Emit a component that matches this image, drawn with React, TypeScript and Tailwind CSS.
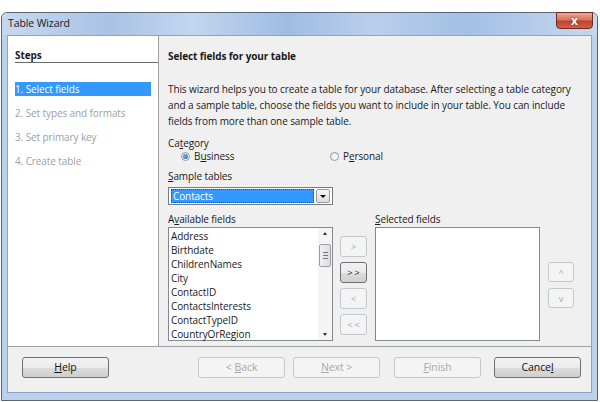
import React from "react";

const fields = [
  "Address",
  "Birthdate",
  "ChildrenNames",
  "City",
  "ContactID",
  "ContactsInterests",
  "ContactTypeID",
  "CountryOrRegion",
];

function SmallBtn({ label, enabled, className = "" }: { label: string; enabled?: boolean; className?: string }) {
  return (
    <div
      className={`flex items-center justify-center rounded-[3px] border text-[9px] leading-none ${
        enabled
          ? "border-[#707070] bg-[linear-gradient(#f2f2f2_0%,#ebebeb_50%,#dddddd_51%,#cfcfcf_100%)] text-[#222]"
          : "border-[#c4c8cb] bg-[#f4f4f4] text-[#a8a8a8]"
      } ${className}`}
    >
      {label}
    </div>
  );
}

function FootBtn({ children, enabled, className = "" }: { children: React.ReactNode; enabled?: boolean; className?: string }) {
  return (
    <div
      className={`flex h-[21px] w-[87px] items-center justify-center rounded-[3px] border text-[10.5px] ${
        enabled
          ? "border-[#707070] bg-[linear-gradient(#f2f2f2_0%,#ebebeb_50%,#dddddd_51%,#cfcfcf_100%)] text-[#111]"
          : "border-[#c4c8cb] bg-[#f4f4f4] text-[#a8a8a8]"
      } ${className}`}
    >
      {children}
    </div>
  );
}

function Radio({ checked }: { checked?: boolean }) {
  return (
    <span className="flex h-[9px] w-[9px] items-center justify-center rounded-full border border-[#8a9aab] bg-[linear-gradient(135deg,#e4e8ec,#ffffff)]">
      {checked && <span className="h-[5px] w-[5px] rounded-full bg-[radial-gradient(circle_at_40%_40%,#6fb0e0,#1f5f96)]" />}
    </span>
  );
}

export default function App() {
  return (
    <div className="h-[402px] w-[600px] overflow-hidden bg-white font-['Open_Sans',sans-serif] text-[10px] tracking-[-0.1px] text-black">
      <div className="ml-[1px] mt-[12px] flex h-[389px] w-[597px] flex-col rounded-t-[6px] border border-[#56687c] bg-[#bcd2ec]">
        {/* title bar */}
        <div className="relative flex h-[22px] shrink-0 items-center rounded-t-[5px] bg-[linear-gradient(90deg,#c6d8ee_0%,#aac3e5_18%,#c2d6ee_32%,#a0bce2_48%,#b9cfeb_62%,#a5c0e5_78%,#c4d8ef_100%)] pl-[6px]">
          <span className="text-[10.5px] text-[#1a1a1a]">Table Wizard</span>
          <div className="absolute right-[4px] top-[-1px] flex h-[17px] w-[37px] items-center justify-center rounded-b-[4px] border border-[#6e2a22] bg-[linear-gradient(#e9a999_0%,#d8735f_45%,#c2412a_55%,#d0614a_100%)]">
            <span className="text-[12px] font-bold leading-none text-white [text-shadow:0_0_2px_#5a1a10]">x</span>
          </div>
        </div>
        {/* client area */}
        <div className="mx-[5px] flex h-[358px] flex-col border border-[#8ea4c0] bg-[#f0f0f0]">
          <div className="flex h-[311px] border-b border-[#a0a0a0]">
            {/* steps */}
            <div className="w-[151px] shrink-0 border-r border-[#a0a0a0] bg-white pl-[7px] pr-[7px] pt-[13px]">
              <div className="mr-[-7px] h-[14px] border-b border-[#6a6a6a] font-bold leading-[12px] text-[#1a1a1a]">
                Steps
              </div>
              <div className="mt-[19px] flex flex-col gap-[10px]">
                <div className="h-[14px] bg-[#3399ff] leading-[14px] text-white">1. Select fields</div>
                <div className="h-[14px] leading-[14px] text-[#a0a0a0]">2. Set types and formats</div>
                <div className="h-[14px] leading-[14px] text-[#a0a0a0]">3. Set primary key</div>
                <div className="h-[14px] leading-[14px] text-[#a0a0a0]">4. Create table</div>
              </div>
            </div>
            {/* main */}
            <div className="flex-1 pl-[9px] pt-[13px] text-[#1a1a1a]">
              <div className="h-[14px] font-bold leading-[14px]">Select fields for your table</div>
              <p className="mt-[18px] w-[412px] leading-[16px]">
                This wizard helps you to create a table for your database. After selecting a table category and a
                sample table, choose the fields you want to include in your table. You can include fields from more
                than one sample table.
              </p>
              <div className="mt-[8px] h-[13px] leading-[13px]">
                Ca<span className="underline">t</span>egory
              </div>
              <div className="flex h-[13px] items-center leading-[13px]">
                <div className="ml-[13px] flex w-[149px] items-center gap-[4px]">
                  <Radio checked />
                  <span>
                    B<span className="underline">u</span>siness
                  </span>
                </div>
                <div className="flex items-center gap-[4px]">
                  <Radio />
                  <span>
                    P<span className="underline">e</span>rsonal
                  </span>
                </div>
              </div>
              <div className="mt-[6px] h-[14px] leading-[14px]">
                <span className="underline">S</span>ample tables
              </div>
              <div className="mt-[4px] flex h-[18px] w-[165px] items-center gap-[2px] border border-[#7a7a7a] bg-white px-[2px]">
                <div className="flex h-[14px] flex-1 items-center border border-dotted border-[#1a4f8a] bg-[#3399ff] pl-[1px] text-white">
                  Contacts
                </div>
                <div className="flex h-[14px] w-[14px] items-center justify-center rounded-[2px] border border-[#9a9a9a] bg-[linear-gradient(#f7f7f7,#dcdcdc)]">
                  <span className="h-0 w-0 border-x-[3px] border-t-[3px] border-x-transparent border-t-black" />
                </div>
              </div>
              <div className="mt-[7px] flex">
                <div className="w-[165px]">
                  <div className="h-[14px] leading-[14px]">
                    A<span className="underline">v</span>ailable fields
                  </div>
                  <div className="mt-[1px] flex h-[114px] border border-[#828790] bg-white">
                    <div className="flex-1 pl-[2px] pt-[1px]">
                      {fields.map((f) => (
                        <div key={f} className="h-[14px] leading-[14px]">
                          {f}
                        </div>
                      ))}
                    </div>
                    <div className="flex w-[14px] flex-col items-center bg-[#f4f4f4] py-[4px]">
                      <span className="h-0 w-0 border-x-[2.5px] border-b-[3px] border-x-transparent border-b-[#333]" />
                      <div className="mt-[9px] flex h-[23px] w-[12px] flex-col items-center justify-center gap-[2px] rounded-[2px] border border-[#9aa0a6] bg-[linear-gradient(90deg,#f0f0f0,#dcdcdc)]">
                        <span className="h-px w-[5px] bg-[#777]" />
                        <span className="h-px w-[5px] bg-[#777]" />
                        <span className="h-px w-[5px] bg-[#777]" />
                      </div>
                      <div className="flex-1" />
                      <span className="h-0 w-0 border-x-[2.5px] border-t-[3px] border-x-transparent border-t-[#333]" />
                    </div>
                  </div>
                </div>
                <div className="ml-[7px] flex w-[27px] flex-col gap-[5px] pt-[24px]">
                  <SmallBtn label=">" className="h-[21px]" />
                  <SmallBtn label="> >" enabled className="h-[21px]" />
                  <SmallBtn label="<" className="h-[21px]" />
                  <SmallBtn label="< <" className="h-[21px]" />
                </div>
                <div className="ml-[8px] w-[165px]">
                  <div className="h-[14px] leading-[14px]">
                    <span className="underline">S</span>elected fields
                  </div>
                  <div className="mt-[1px] h-[114px] border border-[#828790] bg-white" />
                </div>
                <div className="ml-[8px] flex w-[26px] flex-col gap-[6px] pt-[50px]">
                  <SmallBtn label="^" className="h-[20px]" />
                  <SmallBtn label="v" className="h-[20px]" />
                </div>
              </div>
            </div>
          </div>
          {/* footer */}
          <div className="flex flex-1 items-start pl-[14px] pr-[10px] pt-[10px]">
            <FootBtn enabled>
              <span className="underline">H</span>elp
            </FootBtn>
            <div className="flex-1" />
            <FootBtn>
              &lt; <span className="ml-[3px] underline">B</span>ack
            </FootBtn>
            <FootBtn className="ml-[8px]">
              <span className="underline">N</span>ext &gt;
            </FootBtn>
            <FootBtn className="ml-[14px]">
              <span className="underline">F</span>inish
            </FootBtn>
            <FootBtn enabled className="ml-[13px]">
              Cance<span className="underline">l</span>
            </FootBtn>
          </div>
        </div>
      </div>
    </div>
  );
}
